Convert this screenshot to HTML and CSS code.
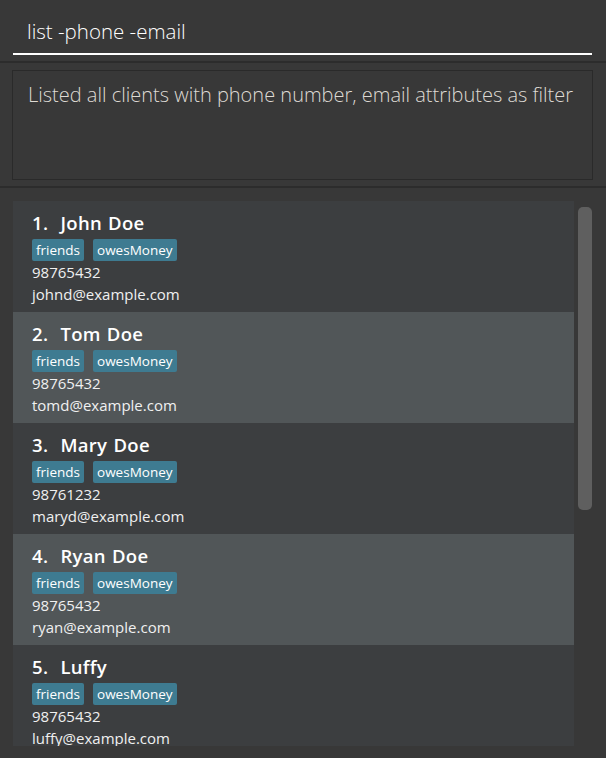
FILE: index.html
```html
<!DOCTYPE html>
<html>
<head>
<meta charset="utf-8">
<link rel="stylesheet" href="styles.css">
</head>
<body>
<div class="app">
  <div class="command">
    <div class="input">list -phone -email</div>
  </div>
  <div class="sep"></div>
  <div class="result">
    <div class="result-box">Listed all clients with phone number, email attributes as filter</div>
  </div>
  <div class="sep"></div>
  <div class="list-pane">
    <div class="list">
      <div class="cell">
        <div class="name">1.&nbsp;&nbsp;John Doe</div>
        <div class="tags"><span class="tag">friends</span><span class="tag">owesMoney</span></div>
        <div class="field">98765432</div>
        <div class="field">johnd@example.com</div>
      </div>
      <div class="cell alt">
        <div class="name">2.&nbsp;&nbsp;Tom Doe</div>
        <div class="tags"><span class="tag">friends</span><span class="tag">owesMoney</span></div>
        <div class="field">98765432</div>
        <div class="field">tomd@example.com</div>
      </div>
      <div class="cell">
        <div class="name">3.&nbsp;&nbsp;Mary Doe</div>
        <div class="tags"><span class="tag">friends</span><span class="tag">owesMoney</span></div>
        <div class="field">98761232</div>
        <div class="field">maryd@example.com</div>
      </div>
      <div class="cell alt">
        <div class="name">4.&nbsp;&nbsp;Ryan Doe</div>
        <div class="tags"><span class="tag">friends</span><span class="tag">owesMoney</span></div>
        <div class="field">98765432</div>
        <div class="field">ryan@example.com</div>
      </div>
      <div class="cell">
        <div class="name">5.&nbsp;&nbsp;Luffy</div>
        <div class="tags"><span class="tag">friends</span><span class="tag">owesMoney</span></div>
        <div class="field">98765432</div>
        <div class="field">luffy@example.com</div>
      </div>
    </div>
    <div class="scrollbar"><div class="thumb"></div></div>
  </div>
</div>
</body>
</html>
```
FILE: styles.css
```css
html, body {
  margin: 0;
  padding: 0;
  background: #383838;
}
.app {
  width: 606px;
  height: 758px;
  display: flex;
  flex-direction: column;
  font-family: "Open Sans", "Noto Sans", sans-serif;
  background: #383838;
  overflow: hidden;
}
.command {
  padding: 10px 14px 6px 13px;
}
.input {
  height: 43px;
  line-height: 43px;
  border-bottom: 2px solid #ffffff;
  padding-left: 14px;
  color: #ffffff;
  font-size: 20.5px;
  font-weight: 300;
}
.sep {
  height: 2px;
  background: #2c2c2c;
}
.result {
  padding: 7px 13px 6px 12px;
}
.result-box {
  border: 1px solid #2a2a2a;
  padding: 10px 15px 0 15px;
  box-sizing: border-box;
  height: 110px;
  color: #dedad4;
  font-size: 20px;
  line-height: 28px;
  font-weight: 300;
  white-space: nowrap;
}
.list-pane {
  flex: 1;
  display: flex;
  padding: 13px 0 12px 13px;
  min-height: 0;
}
.list {
  width: 561px;
  overflow: hidden;
  display: flex;
  flex-direction: column;
}
.cell {
  flex: none;
  height: 111px;
  box-sizing: border-box;
  padding: 9px 0 0 19px;
  background: #3c3e40;
  color: #ffffff;
}
.cell.alt {
  background: #515658;
}
.name {
  font-size: 18.5px;
  font-weight: 600;
  letter-spacing: 0.3px;
  word-spacing: 1px;
  line-height: 25px;
  color: #ffffff;
}
.tags {
  display: flex;
  gap: 9px;
  margin-top: 4px;
  height: 22px;
}
.tag {
  background: #3e7b91;
  color: #ffffff;
  font-size: 13.5px;
  line-height: 22px;
  padding: 0 4px;
  border-radius: 2px;
}
.field {
  font-size: 15px;
  line-height: 22px;
  color: #f0f0f0;
}
.scrollbar {
  width: 32px;
  flex: none;
}
.thumb {
  margin: 6px 0 0 4px;
  width: 14px;
  height: 303px;
  border-radius: 5px;
  background: #5f5f5f;
}
```
